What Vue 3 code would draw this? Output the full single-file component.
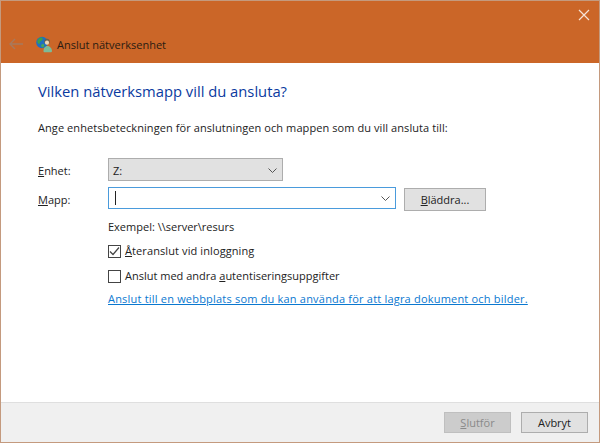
<template>
  <div class="dialog">
    <header class="titlebar">
      <button class="close" aria-label="Stäng">
        <svg width="12" height="12" viewBox="0 0 12 12"><path d="M1 1l10 10M11 1L1 11" stroke="#f6e3d6" stroke-width="1.2" fill="none" /></svg>
      </button>
      <div class="title-row">
        <svg class="back" width="14" height="12" viewBox="0 0 14 12"><path d="M6 1L1 6l5 5M1 6h13" stroke="#a8795c" stroke-width="1.4" fill="none" /></svg>
        <svg class="net-icon" width="17" height="17" viewBox="0 0 17 17">
          <circle cx="6" cy="6.500" r="5.800" fill="#1f6fc0" />
          <path d="M1.500 4.500C3 1.500 5 1 6.500 2c.8 1.500-.8 2.500-1.800 3.300S3.800 8.500 2.800 8C1.600 7.300 1 6 1.500 4.500z" fill="#3aa04a" />
          <path d="M5.500 8.500c1.500-1 2.800-.5 2.800 1s-1.300 2.300-2.200 1.800-1.400-2-.6-2.800z" fill="#46a858" />
          <path d="M8.300 5.500c0-1.800 1.200-2.800 2.700-2.800s2.800 1 2.800 2.800v1.700H8.300z" fill="#6b5f4c" />
          <circle cx="11" cy="6.700" r="2.100" fill="#ecd6b6" />
          <path d="M7.500 15.500c0-3.200 1.400-5.500 3.700-5.500s4.800 2 4.800 5c0 .8-.6 1.300-1.400 1.300H8.700c-.7 0-1.200-.3-1.200-.8z" fill="#7dbb98" />
        </svg>
        <span class="title-text">Anslut nätverksenhet</span>
      </div>
    </header>

    <main class="content">
      <h1 class="heading">Vilken nätverksmapp vill du ansluta?</h1>
      <p class="desc">Ange enhetsbeteckningen för anslutningen och mappen som du vill ansluta till:</p>

      <div class="form">
        <div class="row row-drive">
          <label class="field-label"><u>E</u>nhet:</label>
          <div class="select">
            <span>Z:</span>
            <svg width="9" height="5" viewBox="0 0 9 5"><path d="M.5.500L4.500 4.500 8.500.500" stroke="#555" fill="none" /></svg>
          </div>
        </div>
        <div class="row row-folder">
          <label class="field-label"><u>M</u>app:</label>
          <div class="combo">
            <span class="caret"></span>
            <svg width="9" height="5" viewBox="0 0 9 5"><path d="M.5.500L4.500 4.500 8.500.500" stroke="#555" fill="none" /></svg>
          </div>
          <button class="btn browse"><u>B</u>läddra...</button>
        </div>

        <div class="options">
          <div class="example">Exempel: \\server\resurs</div>
          <div class="check check-first">
            <span class="box">
              <svg width="11" height="11" viewBox="0 0 11 11"><path d="M1 5.500L4 8.500 10 1.500" stroke="#444" stroke-width="1.200" fill="none" /></svg>
            </span>
            <span class="spaced"><u>Å</u>teranslut vid inloggning</span>
          </div>
          <div class="check check-second">
            <span class="box"></span>
            <span>Anslut med andra <u>a</u>utentiseringsuppgifter</span>
          </div>
          <a class="link" href="#">Anslut till en webbplats som du kan använda för att lagra dokument och bilder.</a>
        </div>
      </div>
    </main>

    <footer class="footer">
      <button class="btn action disabled"><u>S</u>lutför</button>
      <button class="btn action">Avbryt</button>
    </footer>
  </div>
</template>

<script setup>
</script>

<style>
html, body {
  margin: 0;
  background: #fff;
}
</style>

<style scoped>
.dialog {
  width: 600px;
  height: 443px;
  box-sizing: border-box;
  border: 1px solid #c49a7e;
  display: flex;
  flex-direction: column;
  font-family: "Open Sans", "Noto Sans", sans-serif;
  font-size: 11px;
  color: #222;
  background: #fff;
  overflow: hidden;
}
.titlebar {
  height: 62px;
  flex: none;
  background: #cb6628;
  position: relative;
  display: flex;
  align-items: flex-end;
}
.close {
  position: absolute;
  top: 8px;
  right: 9px;
  width: 12px;
  height: 12px;
  padding: 0;
  border: 0;
  background: none;
  display: flex;
}
.title-row {
  display: flex;
  align-items: center;
  height: 28px;
  margin-bottom: 5px;
  padding-left: 8px;
}
.back {
  margin-right: 13px;
}
.net-icon {
  margin-right: 4px;
}
.title-text {
  color: #2a1c12;
  font-size: 11px;
}
.content {
  flex: 1;
  padding: 0 0 0 37px;
  min-height: 0;
}
.heading {
  margin: 17px 0 0;
  font-size: 14.76px;
  line-height: 22px;
  font-weight: 400;
  color: #0a3aa0;
}
.desc {
  margin: 18px 0 0;
  line-height: 16px;
  letter-spacing: 0.08px;
}
.form {
  margin-top: 22px;
}
.row {
  display: flex;
  align-items: flex-start;
}
.row-folder {
  margin-top: 6px;
}
.field-label {
  width: 70px;
  flex: none;
  padding-top: 5px;
  line-height: 16px;
}
.select {
  width: 175px;
  height: 23px;
  box-sizing: border-box;
  border: 1px solid #adadad;
  background: #e1e1e1;
  display: flex;
  align-items: center;
  justify-content: space-between;
  padding: 1px 5px 0 4px;
}
.combo {
  width: 288px;
  height: 22px;
  box-sizing: border-box;
  border: 1px solid #4a9bdc;
  background: #fff;
  display: flex;
  align-items: center;
  justify-content: space-between;
  padding: 0 5px 0 6px;
}
.caret {
  width: 1px;
  height: 14px;
  background: #222;
}
.btn {
  box-sizing: border-box;
  border: 1px solid #adadad;
  background: #e1e1e1;
  font: inherit;
  color: #222;
  padding: 0;
}
.browse {
  width: 82px;
  height: 23px;
  margin: 1px 0 0 8px;
}
.options {
  padding-left: 70px;
  margin-top: 8px;
}
.example {
  line-height: 16px;
}
.check {
  display: flex;
  align-items: center;
  line-height: 16px;
  gap: 4px;
}
.spaced {
  letter-spacing: 0.1px;
}
.check-first {
  margin-top: 8px;
}
.check-second {
  margin-top: 9px;
}
.box {
  width: 13px;
  height: 13px;
  box-sizing: border-box;
  border: 1px solid #444;
  background: #fff;
  display: flex;
  align-items: center;
  justify-content: center;
}
.link {
  display: block;
  margin-top: 7px;
  line-height: 16px;
  color: #0a78d0;
  text-decoration: underline;
  white-space: nowrap;
  letter-spacing: 0.2px;
}
.footer {
  height: 40px;
  flex: none;
  box-sizing: border-box;
  border-top: 1px solid #dfdfdf;
  background: #f0f0f0;
  display: flex;
  justify-content: flex-end;
  align-items: flex-start;
  gap: 10px;
  padding: 9px 11px 0 0;
}
.action {
  width: 67px;
  height: 21px;
}
.disabled {
  background: #cccccc;
  border-color: #bfbfbf;
  color: #8a8a8a;
}
</style>
